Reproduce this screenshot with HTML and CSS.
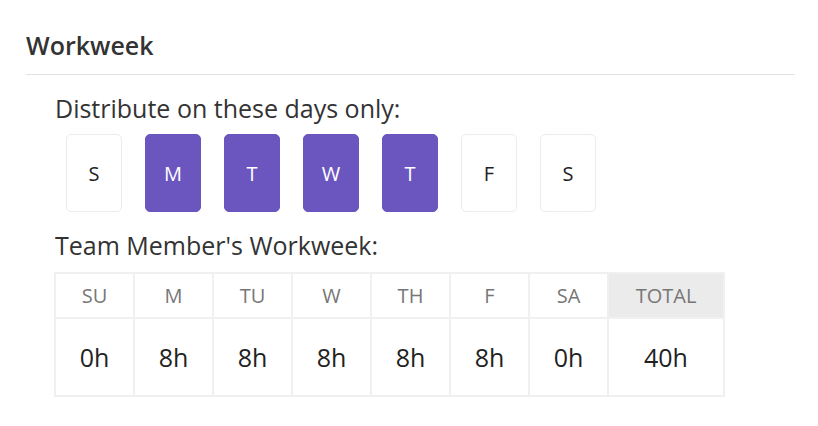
FILE: index.html
```html
<!DOCTYPE html>
<html lang="en">
<head>
    <meta charset="UTF-8">
    <meta name="viewport" content="width=device-width, initial-scale=1.0">
    <title>Workweek</title>
    <link rel="stylesheet" href="styles.css">
</head>
<body>
    <div class="section">
        <h2 class="section-title">Workweek</h2>
        <div class="section-body">
            <p class="field-label">Distribute on these days only:</p>
            <!-- Day toggles -->
            <div class="day-picker">
                <button class="day">S</button>
                <button class="day active">M</button>
                <button class="day active">T</button>
                <button class="day active">W</button>
                <button class="day active">T</button>
                <button class="day">F</button>
                <button class="day">S</button>
            </div>
            <p class="field-label team-label">Team Member's Workweek:</p>
            <!-- Hours per day -->
            <table class="hours-table">
                <colgroup>
                    <col class="day-col">
                    <col class="day-col">
                    <col class="day-col">
                    <col class="day-col">
                    <col class="day-col">
                    <col class="day-col">
                    <col class="day-col">
                    <col class="total-col">
                </colgroup>
                <thead>
                    <tr>
                        <th>Su</th>
                        <th>M</th>
                        <th>Tu</th>
                        <th>W</th>
                        <th>Th</th>
                        <th>F</th>
                        <th>Sa</th>
                        <th class="total">Total</th>
                    </tr>
                </thead>
                <tbody>
                    <tr>
                        <td>0h</td>
                        <td>8h</td>
                        <td>8h</td>
                        <td>8h</td>
                        <td>8h</td>
                        <td>8h</td>
                        <td>0h</td>
                        <td>40h</td>
                    </tr>
                </tbody>
            </table>
        </div>
    </div>
</body>
</html>
```

FILE: styles.css
```css
body {
    margin: 0;
    padding: 0;
    background-color: white;
    font-family: "Open Sans", "Noto Sans", sans-serif;
    color: #333;
}

.section {
    width: 769px;
    padding: 28px 0 0 26px;
}

.section-title {
    margin: 0;
    font-size: 25px;
    font-weight: 600;
    line-height: 34px;
    color: #333;
    padding-bottom: 12px;
    border-bottom: 1px solid #e2e2e2;
}

.section-body {
    padding-left: 29px;
}

.field-label {
    margin: 16px 0 0 0;
    font-size: 25px;
    line-height: 34px;
    color: #333;
}

/* Day toggles */
.day-picker {
    display: flex;
    gap: 23px;
    margin: 9px 0 0 11px;
}

.day {
    width: 56px;
    height: 78px;
    padding: 0;
    border: 1px solid #ececec;
    border-radius: 5px;
    background-color: white;
    color: #222;
    font-family: inherit;
    font-size: 20px;
}

.day.active {
    background-color: #6b56c0;
    border-color: #6b56c0;
    color: white;
}

.team-label {
    margin-top: 16px;
}

/* Hours table */
.hours-table {
    margin: 10px 0 0 -1px;
    border-collapse: collapse;
    table-layout: fixed;
    width: 670px;
}

.day-col {
    width: 79px;
}

.total-col {
    width: 116px;
}

.hours-table th, .hours-table td {
    border: 2px solid #f0f0f0;
    text-align: center;
    padding: 0;
}

.hours-table th {
    height: 43px;
    font-weight: 400;
    font-size: 20px;
    color: #777;
    text-transform: uppercase;
}

.hours-table th.total {
    background-color: #ebebeb;
}

.hours-table td {
    height: 76px;
    font-size: 25px;
    color: #222;
}
```
